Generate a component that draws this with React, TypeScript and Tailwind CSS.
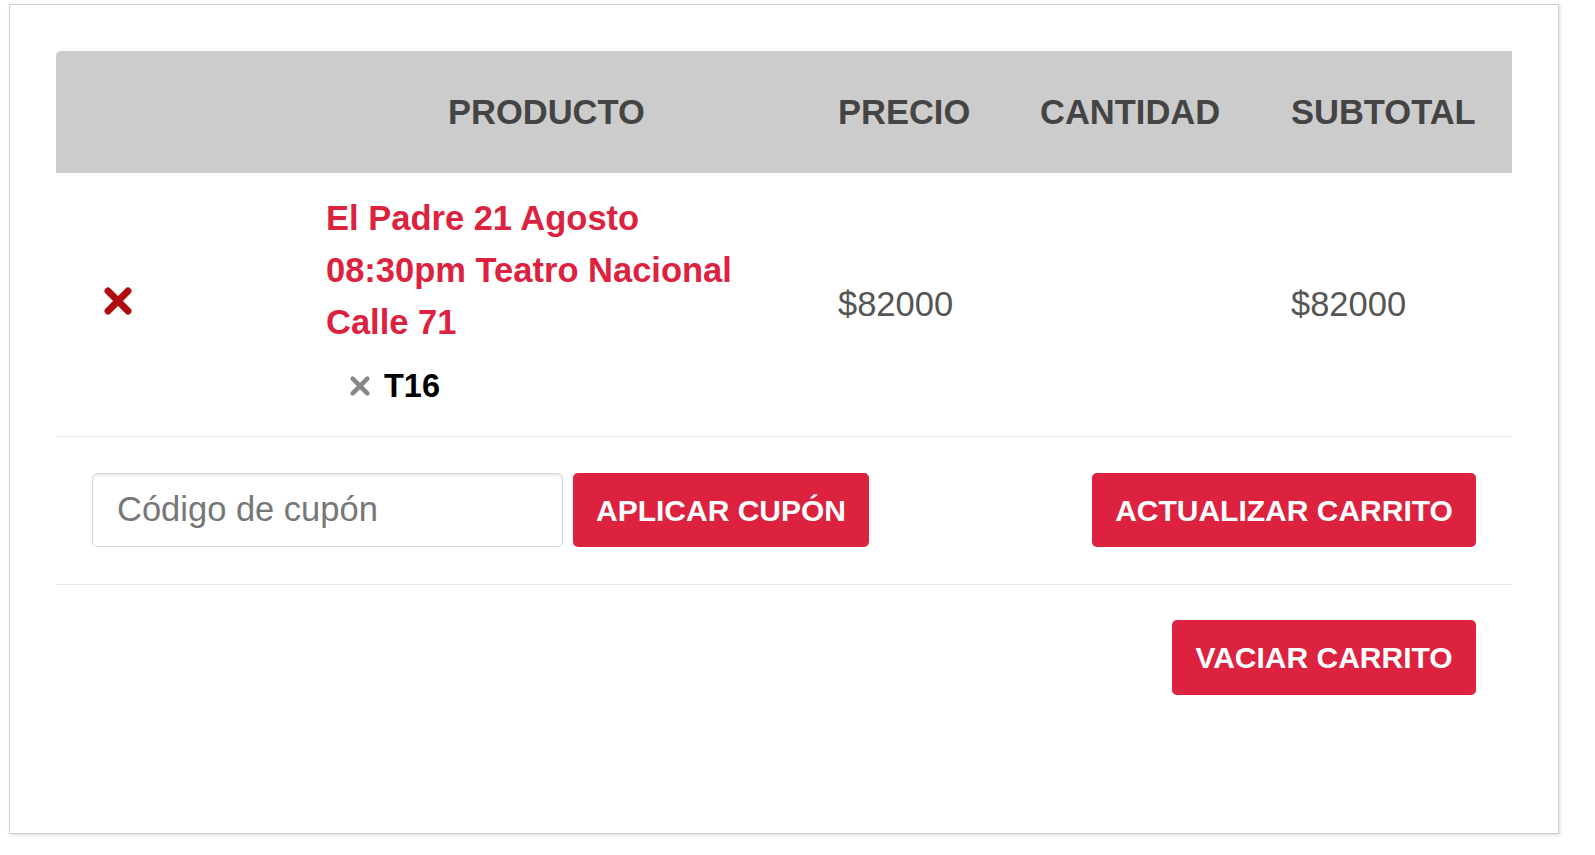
import React from 'react'

const FONT = { fontFamily: '"Liberation Sans", Arial, sans-serif' }

function CrossIcon({ size, color, stroke }: { size: number; color: string; stroke: number }) {
  return (
    <svg width={size} height={size} viewBox="0 0 24 24" fill="none">
      <path d="M4 4 L20 20 M20 4 L4 20" stroke={color} strokeWidth={stroke} strokeLinecap="round" />
    </svg>
  )
}

const COLS = 'grid grid-cols-[270px_512px_202px_251px_1fr]'

export default function App() {
  return (
    <div className="min-h-screen bg-white" style={FONT}>
      <div className="ml-[9px] mt-[4px] w-[1550px] h-[830px] border border-[#cfcfcf] shadow-[1px_1px_3px_rgba(0,0,0,0.15)] p-[46px] bg-white">
        {/* Header */}
        <div className={`${COLS} h-[122px] bg-[#cccccc] rounded-tl-[5px] items-center text-[34.5px] font-bold text-[#444] leading-none`}>
          <div />
          <div className="pl-[122px]">PRODUCTO</div>
          <div>PRECIO</div>
          <div>CANTIDAD</div>
          <div>SUBTOTAL</div>
        </div>

        {/* Item row */}
        <div className={`${COLS} h-[264px] border-b border-[#e8e8e8]`}>
          <div className="flex items-center pl-[47px] pb-[8px]">
            <CrossIcon size={30} color="#b10a0f" stroke={5.5} />
          </div>
          <div className="pt-[19px]">
            <div className="text-[34.5px] leading-[52px] font-bold text-[#dc223f]">
              El Padre 21 Agosto
              <br />
              08:30pm Teatro Nacional
              <br />
              Calle 71
            </div>
            <div className="mt-[18px] flex items-center pl-[23px] leading-[40px]">
              <CrossIcon size={22} color="#888888" stroke={5} />
              <span className="ml-[13px] text-[32.5px] font-bold text-black">T16</span>
            </div>
          </div>
          <div className="flex items-center text-[34.5px] text-[#555]">$82000</div>
          <div />
          <div className="flex items-center text-[34.5px] text-[#555]">$82000</div>
        </div>

        {/* Coupon row */}
        <div className="flex items-center justify-between px-[36px] pt-[36px] pb-[37px] border-b border-[#e8e8e8]">
          <div className="flex items-center gap-[10px]">
            <div className="w-[471px] h-[74px] border border-[#d6d6d6] rounded-[5px] shadow-[inset_0_2px_2px_rgba(0,0,0,0.07)] flex items-center pl-[24px] text-[34.5px] text-[#777]">
              Código de cupón
            </div>
            <button className="w-[296px] h-[74px] bg-[#dc223f] rounded-[5px] text-white font-bold text-[30px]">
              APLICAR CUPÓN
            </button>
          </div>
          <button className="w-[384px] h-[74px] bg-[#dc223f] rounded-[5px] text-white font-bold text-[30px]">
            ACTUALIZAR CARRITO
          </button>
        </div>

        {/* Empty cart row */}
        <div className="flex justify-end px-[36px] pt-[35px]">
          <button className="w-[304px] h-[75px] bg-[#dc223f] rounded-[5px] text-white font-bold text-[30px]">
            VACIAR CARRITO
          </button>
        </div>
      </div>
    </div>
  )
}
